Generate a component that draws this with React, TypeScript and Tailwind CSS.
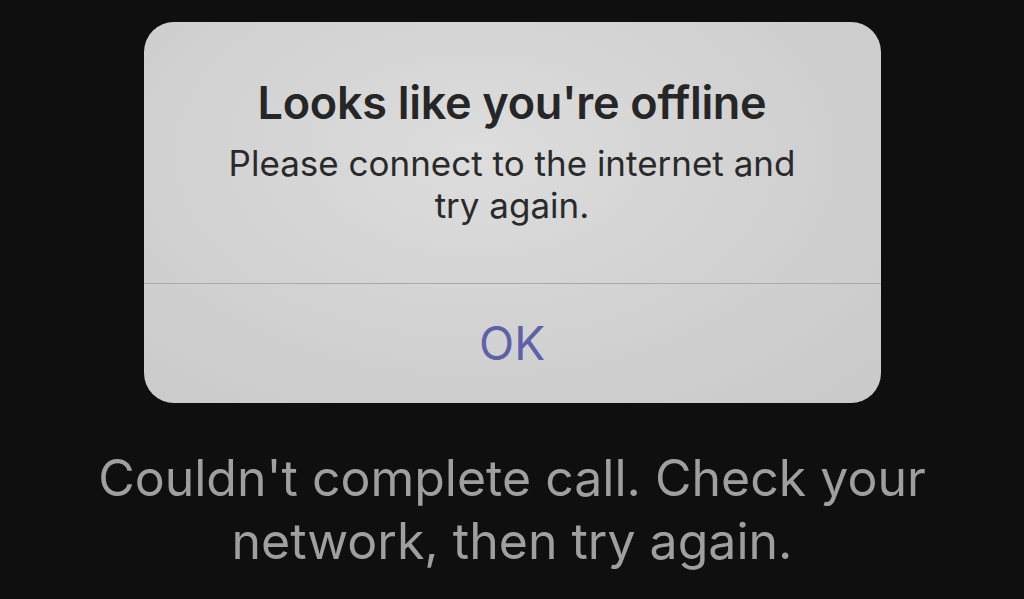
export default function App() {
	return (
		<div className="w-[1024px] h-[599px] overflow-hidden bg-[#0f0f0f] flex flex-col items-center font-['Inter',sans-serif]">
			{/* alert dialog */}
			<div className="mt-[22px] w-[737px] h-[381px] rounded-[30px] bg-[radial-gradient(ellipse_at_45%_35%,#dddddd_0%,#d2d2d2_50%,#c9c9c9_100%)] flex flex-col">
				<div className="h-[261px] flex flex-col items-center pt-[54px] text-center">
					<h1 className="text-[45px] leading-[54px] font-semibold text-[#262626] tracking-[-0.3px]">Looks like you're offline</h1>
					<p className="mt-[12px] w-[600px] text-[35px] leading-[42px] text-[#2a2a2a]">
						Please connect to the internet and try again.
					</p>
				</div>
				<div className="h-px bg-[#a9a9a9]" />
				<button type="button" className="flex-1 flex items-center justify-center text-[46px] text-[#5f61a8]">
					OK
				</button>
			</div>

			<p className="mt-[44px] w-[880px] text-center text-[50px] leading-[63px] text-[#9f9f9f]">
				Couldn't complete call. Check your network, then try again.
			</p>
		</div>
	);
}
